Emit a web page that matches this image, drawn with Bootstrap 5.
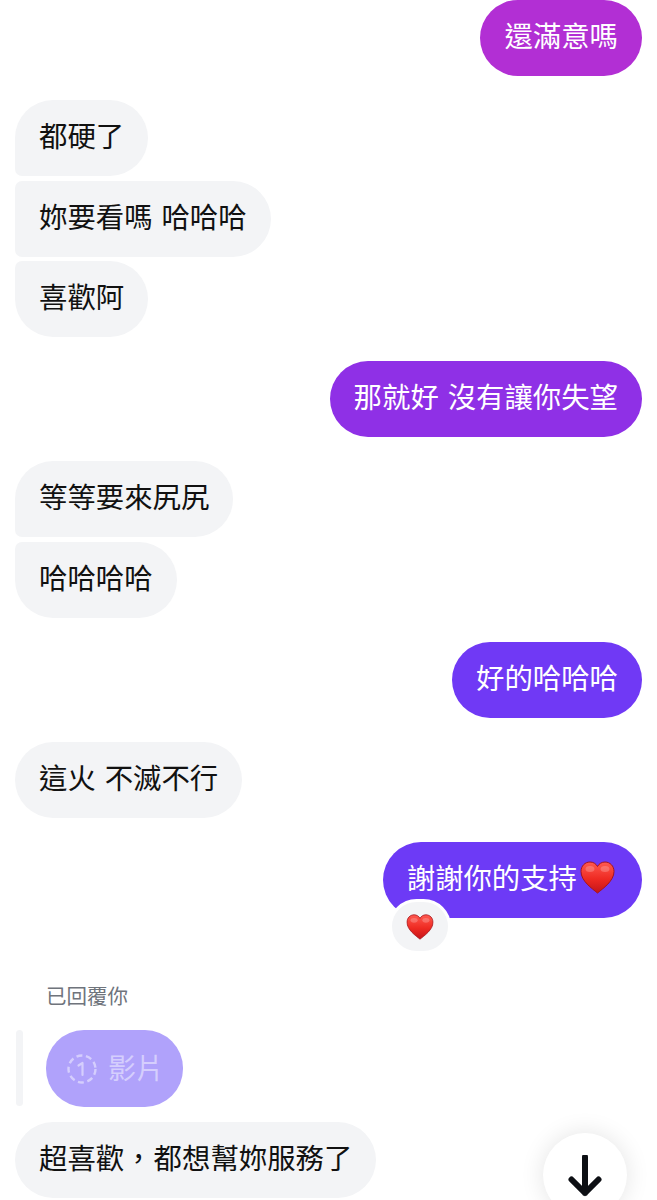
<!DOCTYPE html>
<html lang="zh-Hant">
<head>
  <meta charset="UTF-8">
  <title>Chat</title>
  <meta name="viewport" content="width=device-width, initial-scale=1.0"/>
  <link href="https://cdn.jsdelivr.net/npm/bootstrap@5.3.3/dist/css/bootstrap.min.css" rel="stylesheet">
  <style>
    html, body { height: 1200px; overflow: hidden; }
    body {
      background: #fff;
      font-family: "Noto Sans CJK TC", "Liberation Sans", sans-serif;
    }
    .chat-wrap { width: 657px; height: 1200px; padding: 0 15px; }
    .bubble {
      height: 76px;
      padding: 0 24px;
      font-size: 28.4px;
      line-height: 70px;
      word-spacing: 2.5px;
      border-radius: 38px;
      white-space: nowrap;
    }
    .bubble-in { background: #f3f4f6; color: #111; }
    .bubble-out { color: #fff; }
    .corner-first { border-bottom-left-radius: 7px; }
    .corner-mid { border-top-left-radius: 7px; border-bottom-left-radius: 7px; }
    .corner-last { border-top-left-radius: 7px; }
    .gap-same { margin-top: 4.5px; }
    .gap-group { margin-top: 24px; }
    .tone-1 { background: #b22fd4; }
    .tone-2 { background: #8f30e6; }
    .tone-3 { background: #7039f5; }
    .tone-4 { background: #6d3af6; }
    .heart-big { width: 35px; height: 33px; vertical-align: -5px; margin: 0 3px; }
    .reaction {
      position: absolute;
      left: 6px;
      top: 57px;
      width: 62px;
      height: 55px;
      background: #f3f4f6;
      border: 3px solid #fff;
      border-radius: 28px;
    }
    .reaction svg { width: 28px; height: 26px; margin-top: 2px; }
    .reply-label { margin: 62.500px 0 0 31px; font-size: 20.5px; line-height: 30px; color: #6f747c; }
    .reply-row { margin-top: 20px; }
    .reply-bar { width: 7px; height: 76px; margin: 0 23px 0 1px; background: #f3f4f6; border-radius: 4px; }
    .reply-bubble {
      height: 77px;
      padding: 0 19px 0 20px;
      background: #b0a2fb;
      color: #d5cefd;
      font-size: 28px;
      border-radius: 38px;
    }
    .reply-bubble svg { width: 32px; height: 32px; margin-right: 10px; }
    .reply-bubble span { padding-bottom: 4px; }
    .reply-next { margin-top: 15px; }
    .comma-gap { margin-right: 1px; }
    .jump-btn {
      position: absolute;
      left: 543px;
      top: 1133px;
      width: 84px;
      height: 84px;
      background: #fff;
      border-radius: 50%;
      box-shadow: 0 0 24px rgba(0, 0, 0, .11);
    }
  </style>
</head>
<body>
<div class="chat-wrap position-relative d-flex flex-column">
  <div class="bubble bubble-out tone-1 align-self-end">還滿意嗎</div>

  <div class="bubble bubble-in corner-first align-self-start gap-group">都硬了</div>
  <div class="bubble bubble-in corner-mid align-self-start gap-same">妳要看嗎 哈哈哈</div>
  <div class="bubble bubble-in corner-last align-self-start gap-same">喜歡阿</div>

  <div class="bubble bubble-out tone-2 align-self-end gap-group">那就好 沒有讓你失望</div>

  <div class="bubble bubble-in corner-first align-self-start gap-group">等等要來尻尻</div>
  <div class="bubble bubble-in corner-last align-self-start gap-same">哈哈哈哈</div>

  <div class="bubble bubble-out tone-3 align-self-end gap-group">好的哈哈哈</div>

  <div class="bubble bubble-in align-self-start gap-group">這火 不滅不行</div>

  <div class="position-relative align-self-end gap-group">
    <div class="bubble bubble-out tone-4">謝謝你的支持<svg class="heart-big" viewBox="0 0 35 33"><use href="#heart"/></svg></div>
    <div class="reaction d-flex align-items-center justify-content-center">
      <svg viewBox="0 0 35 33"><use href="#heart"/></svg>
    </div>
  </div>

  <div class="reply-label">已回覆你</div>
  <div class="reply-row d-flex">
    <div class="reply-bar"></div>
    <div class="reply-bubble d-flex align-items-center">
      <svg viewBox="0 0 32 32" fill="none" stroke="#d5cefd">
        <circle cx="16" cy="16" r="13.500" stroke-width="2.400" stroke-dasharray="6 3.600"/>
        <path d="M12.500 12.500 16.500 10V22" stroke-width="2.200" stroke-linecap="round" stroke-linejoin="round"/>
      </svg>
      <span>影片</span>
    </div>
  </div>

  <div class="bubble bubble-in align-self-start reply-next">超喜歡<span class="comma-gap">，</span>都想幫妳服務了</div>

  <div class="jump-btn d-flex justify-content-center">
    <svg width="40" height="44" viewBox="0 0 40 44" fill="none" stroke="#0d0f14" stroke-width="6" stroke-linecap="round" stroke-linejoin="round" style="margin-top:22px">
      <path d="M20 2V38M6.500 24.500 20 38 33.500 24.500"/>
    </svg>
  </div>
</div>

<svg width="0" height="0" class="position-absolute">
  <defs>
    <linearGradient id="heartFill" x1="0" y1="0" x2="0" y2="1">
      <stop offset="0" stop-color="#ff5a50"/>
      <stop offset=".55" stop-color="#ee2a22"/>
      <stop offset="1" stop-color="#c4141a"/>
    </linearGradient>
    <symbol id="heart" viewBox="0 0 35 33">
      <path d="M17.500 32C12 27.500 1 20 1 10.500 1 5 5 1 10 1c3.200 0 6 1.700 7.500 4.500C19 2.700 21.800 1 25 1c5 0 9 4 9 9.500C34 20 23 27.500 17.500 32z" fill="url(#heartFill)" stroke="#a5141c" stroke-width="1"/>
      <ellipse cx="10" cy="8" rx="4.500" ry="3" fill="#fff" opacity=".22"/>
      <ellipse cx="25" cy="8" rx="4.500" ry="3" fill="#fff" opacity=".22"/>
    </symbol>
  </defs>
</svg>

<script src="https://cdn.jsdelivr.net/npm/bootstrap@5.3.3/dist/js/bootstrap.bundle.min.js"></script>
</body>
</html>
